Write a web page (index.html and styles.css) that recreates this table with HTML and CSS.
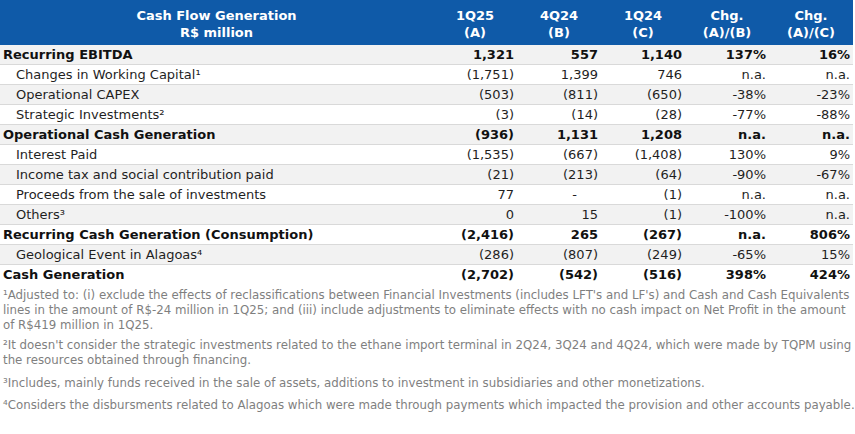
FILE: index.html
```html
<!DOCTYPE html>
<html>
<head>
<meta charset="utf-8">
<link rel="stylesheet" href="styles.css">
</head>
<body>
<div class="page">
<table class="cf">
  <colgroup>
    <col class="c-label"><col class="c-num"><col class="c-num"><col class="c-num"><col class="c-num"><col class="c-num">
  </colgroup>
  <thead>
    <tr>
      <th class="h-label">Cash Flow Generation<br>R$ million</th>
      <th>1Q25<br>(A)</th>
      <th>4Q24<br>(B)</th>
      <th>1Q24<br>(C)</th>
      <th>Chg.<br>(A)/(B)</th>
      <th>Chg.<br>(A)/(C)</th>
    </tr>
  </thead>
  <tbody>
    <tr class="bold shade"><td class="lbl">Recurring EBITDA</td><td>1,321</td><td>557</td><td>1,140</td><td>137%</td><td>16%</td></tr>
    <tr class="sub"><td class="lbl">Changes in Working Capital¹</td><td>(1,751)</td><td>1,399</td><td>746</td><td>n.a.</td><td>n.a.</td></tr>
    <tr class="sub shade"><td class="lbl">Operational CAPEX</td><td>(503)</td><td>(811)</td><td>(650)</td><td>-38%</td><td>-23%</td></tr>
    <tr class="sub"><td class="lbl">Strategic Investments²</td><td>(3)</td><td>(14)</td><td>(28)</td><td>-77%</td><td>-88%</td></tr>
    <tr class="bold shade"><td class="lbl">Operational Cash Generation</td><td>(936)</td><td>1,131</td><td>1,208</td><td>n.a.</td><td>n.a.</td></tr>
    <tr class="sub"><td class="lbl">Interest Paid</td><td>(1,535)</td><td>(667)</td><td>(1,408)</td><td>130%</td><td>9%</td></tr>
    <tr class="sub shade"><td class="lbl">Income tax and social contribution paid</td><td>(21)</td><td>(213)</td><td>(64)</td><td>-90%</td><td>-67%</td></tr>
    <tr class="sub"><td class="lbl">Proceeds from the sale of investments</td><td>77</td><td class="dash">-</td><td>(1)</td><td>n.a.</td><td>n.a.</td></tr>
    <tr class="sub shade"><td class="lbl">Others³</td><td>0</td><td>15</td><td>(1)</td><td>-100%</td><td>n.a.</td></tr>
    <tr class="bold"><td class="lbl">Recurring Cash Generation (Consumption)</td><td>(2,416)</td><td>265</td><td>(267)</td><td>n.a.</td><td>806%</td></tr>
    <tr class="sub shade"><td class="lbl">Geological Event in Alagoas⁴</td><td>(286)</td><td>(807)</td><td>(249)</td><td>-65%</td><td>15%</td></tr>
    <tr class="bold last"><td class="lbl">Cash Generation</td><td>(2,702)</td><td>(542)</td><td>(516)</td><td>398%</td><td>424%</td></tr>
  </tbody>
</table>
<div class="notes">
  <p class="n1">¹Adjusted to: (i) exclude the effects of reclassifications between Financial Investments (includes LFT's and LF's) and Cash and Cash Equivalents<br>lines in the amount of R$-24 million in 1Q25; and (iii) include adjustments to eliminate effects with no cash impact on Net Profit in the amount<br>of R$419 million in 1Q25.</p>
  <p class="n2">²It doesn't consider the strategic investments related to the ethane import terminal in 2Q24, 3Q24 and 4Q24, which were made by TQPM using<br>the resources obtained through financing.</p>
  <p class="n3">³Includes, mainly funds received in the sale of assets, additions to investment in subsidiaries and other monetizations.</p>
  <p class="n4">⁴Considers the disbursments related to Alagoas which were made through payments which impacted the provision and other accounts payable.</p>
</div>
</div>
</body>
</html>
```

FILE: styles.css
```css
html, body {
  margin: 0;
  padding: 0;
  background: #ffffff;
}
.page {
  width: 855px;
  font-family: "DejaVu Sans", Verdana, sans-serif;
  color: #1f1f1f;
}
.cf {
  width: 853px;
  border-collapse: collapse;
  table-layout: fixed;
  font-size: 13px;
}
.c-label { width: 433px; }
.c-num { width: 84px; }
.cf thead th {
  background: #0f5aa8;
  color: #ffffff;
  font-weight: bold;
  text-align: center;
  line-height: 17px;
  height: 45px;
  padding: 7px 2px 0 2px;
  box-sizing: border-box;
  vertical-align: top;
}
.cf td {
  height: 19px;
  line-height: 19px;
  padding: 0 3px 0 3px;
  text-align: right;
  border-bottom: 1px solid #d9d9d9;
  white-space: nowrap;
}
.cf td.lbl { text-align: left; }
.cf tr.sub td.lbl { padding-left: 16px; }
.cf td.dash { padding-right: 24px; }
.cf tr.bold td { font-weight: bold; color: #111; }
.cf tr.shade td { background: #f2f2f2; }
.cf tr.last td { border-bottom: none; }
.notes {
  font-family: "DejaVu Sans", Verdana, sans-serif;
  color: #7f7f7f;
  font-size: 11.8px;
  line-height: 15px;
  padding: 4px 3px 0 3px;
}
.notes p {
  margin: 0;
  white-space: nowrap;
}
.notes p.n2 { margin-top: 5px; }
.notes p.n3 { margin-top: 8px; }
.notes p.n4 { margin-top: 7px; }
```
